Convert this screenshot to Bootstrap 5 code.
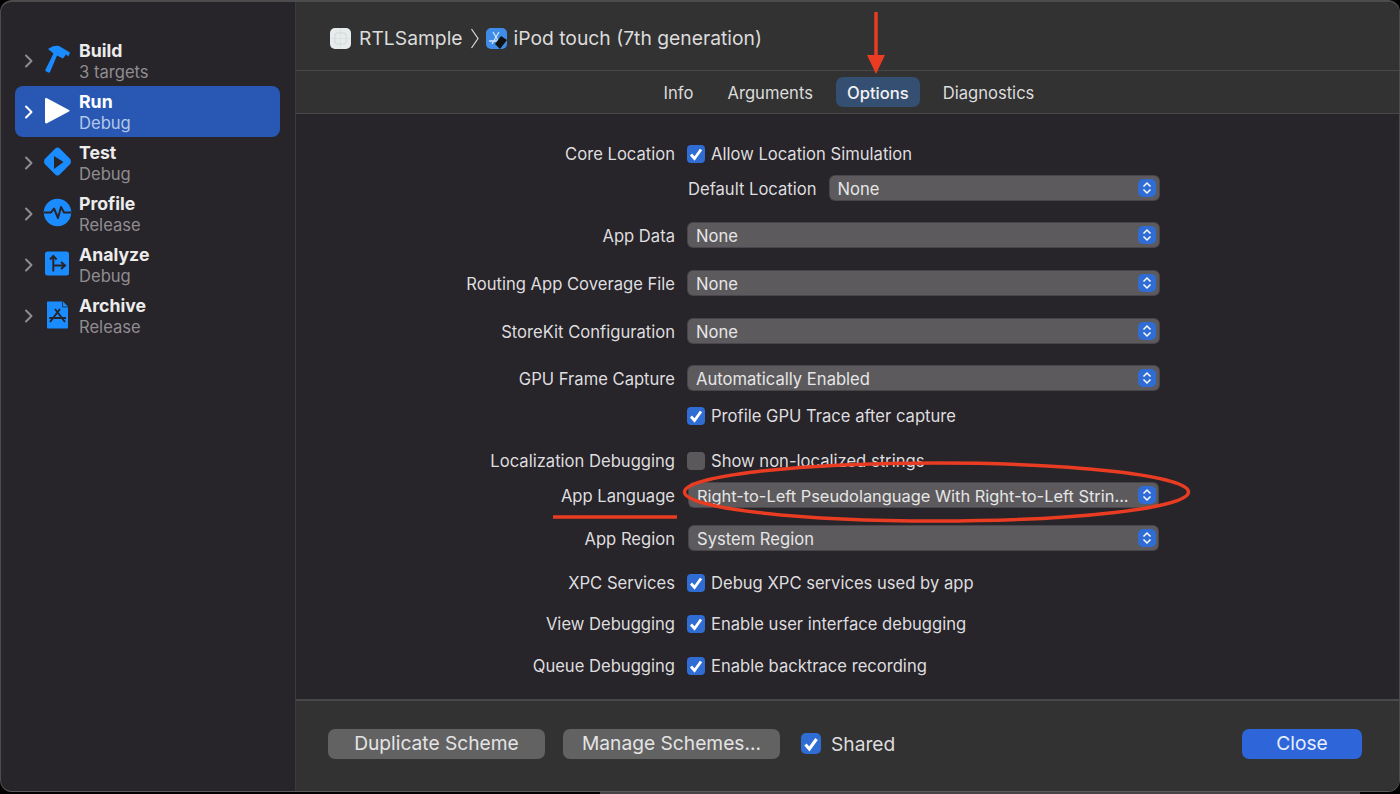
<!DOCTYPE html>
<html lang="en">
<head>
    <meta charset="UTF-8">
    <meta name="viewport" content="width=device-width, initial-scale=1.0">
    <title>Edit Scheme</title>
    <link href="https://cdn.jsdelivr.net/npm/bootstrap@5.3.0/dist/css/bootstrap.min.css" rel="stylesheet">
    <style>
        html, body {
            height: 100%;
            overflow: hidden;
            background: #000;
        }

        body {
            font-family: Inter, "Liberation Sans", sans-serif;
            color: #dedddf;
            font-size: 16.6px;
        }

        .sheet {
            height: 792px;
            background: #27242a;
            border: 1px solid #4c4c4c;
            border-top-width: 2px;
            border-bottom-color: #5a5a5a;
            border-radius: 12px;
            overflow: hidden;
            position: relative;
        }

        .under-strip {
            height: 2px;
            width: 760px;
            margin-left: 600px;
            background: #444;
        }

        /* sidebar */
        .side {
            width: 295px;
            padding: 33px 15px 0 14px;
            border-right: 1px solid #3c3a3d;
            flex-shrink: 0;
        }

        .side .list-group-item {
            background: transparent;
            border: 0;
            height: 51px;
            padding: 0 0 0 9px;
            border-radius: 8px;
            color: #e6e6e7;
        }

        .side .list-group-item.active {
            background: #2858b3;
            margin: 0;
        }

        .chev {
            width: 9px;
            height: 14px;
            margin-right: 11px;
            color: #8f8d90;
        }

        .active .chev {
            color: #fff;
        }

        .act-icon {
            width: 28px;
            height: 28px;
            margin-right: 7px;
            flex-shrink: 0;
            overflow: visible;
        }

        .act-text {
            padding-top: 2px;
        }

        .act-name {
            font-size: 17.7px;
            font-weight: 700;
            line-height: 21px;
            color: #ececec;
        }

        .act-sub {
            font-size: 16.6px;
            line-height: 22px;
            color: #8f8d90;
        }

        .active .act-name {
            color: #fff;
        }

        .active .act-sub {
            color: #b5c6e8;
        }

        /* top */
        .top-bar {
            height: 69px;
            background: #323232;
            padding: 5px 0 0 34px;
            font-size: 19.3px;
            border-bottom: 1px solid #484848;
            color: #dcdcdc;
        }

        .crumb-sep {
            margin: 0 7px 0 8px;
        }

        .crumb-text {
            margin-left: 7px;
        }

        .tab-bar {
            height: 43px;
            background: #323232;
            border-bottom: 1px solid #484848;
            padding-left: 3px;
        }

        .tab-list {
            gap: 12px;
        }

        .tab-bar .nav-link {
            color: #dcdcdc;
            padding: 0 11px;
            height: 30px;
            line-height: 32px;
            font-size: 16.6px;
            border-radius: 7px;
        }

        .tab-bar .nav-link.active {
            background: #344f72;
            color: #f2f2f2;
            font-weight: 500;
        }

        /* form */
        .opts {
            padding-top: 27px;
            padding-right: 240px;
        }

        .opt-row {
            height: 24px;
        }

        .opt-label {
            width: 379px;
            text-align: right;
            margin-right: 13px;
            padding-top: 2px;
            flex-shrink: 0;
        }

        .opt-check {
            display: flex;
            align-items: center;
            margin: 0 0 0 -1px;
            padding: 2px 0 0;
        }

        .opt-check .form-check-input {
            width: 18px;
            height: 18px;
            margin: 0 6px 0 0;
            float: none;
            border: 0;
            border-radius: 4px;
            background-color: #5a585b;
        }

        .opt-check .form-check-input:checked {
            background-color: #2f6cd3;
            --bs-form-check-bg-image: url("data:image/svg+xml,%3csvg xmlns='http://www.w3.org/2000/svg' viewBox='0 0 18 18'%3e%3cpath fill='none' stroke='%23fff' stroke-width='2.800' d='M4 9.500 7.500 13.500 14 4.500'/%3e%3c/svg%3e");
        }

        .popup {
            flex-grow: 1;
            height: 24px;
            background: #5c5a5d;
            color: #e6e6e6;
            border: 0;
            border-radius: 5px;
            padding: 0 3px 0 8px;
            font-size: 16.6px;
            box-shadow: 0 0 0 1px #48464a;
        }

        .popup span {
            padding-top: 2px;
        }

        .popup:hover, .popup:active {
            background: #5c5a5d !important;
            color: #e6e6e6 !important;
        }

        .popup-inset {
            margin: 0 1px;
            padding-left: 8px;
            padding-right: 2px;
        }

        .popup-long {
            font-size: 16.4px;
        }

        .stepper {
            width: 18px;
            height: 18px;
            background: #2f6cd3;
            border-radius: 5px;
            flex-shrink: 0;
        }

        .opt-inline-label {
            margin-right: 13px;
            padding-top: 2px;
        }

        .m11 { margin-top: 11px; }
        .m13 { margin-top: 13px; }
        .m17 { margin-top: 17px; }
        .m18 { margin-top: 18px; }
        .m19 { margin-top: 19px; }
        .m20 { margin-top: 20px; }
        .m21 { margin-top: 21px; }
        .m23 { margin-top: 23px; }
        .m24 { margin-top: 24px; }

        /* footer */
        .foot {
            height: 92px;
            background: #323232;
            border-top: 2px solid #484848;
            padding: 0 37px 4px 32px;
            font-size: 19.2px;
        }

        .mac-btn {
            height: 30px;
            width: 217px;
            background: #636263;
            color: #e4e4e4;
            border: 0;
            border-radius: 7px;
            font-size: 19.2px;
            line-height: 28px;
            padding: 0 0 2px;
        }

        .mac-btn:hover, .mac-btn:active {
            background: #636263 !important;
            color: #e4e4e4 !important;
        }

        .mac-next {
            margin-left: 18px;
        }

        .mac-blue, .mac-blue:hover, .mac-blue:active {
            width: 120px;
            background: #2e66d9 !important;
            color: #e6eeff !important;
        }

        .foot .opt-check {
            margin-left: 21px;
            padding: 0;
        }

        .foot .opt-check .form-check-input {
            width: 20px;
            height: 21px;
            margin-right: 10px;
            border-radius: 5px;
        }

        .notes {
            position: absolute;
            left: -1px;
            top: -2px;
            pointer-events: none;
        }
    </style>
</head>
<body>
<div class="sheet d-flex">
    <div class="side">
        <div class="list-group">
            <a class="list-group-item d-flex align-items-center">
                <svg class="chev" viewBox="0 0 9 14"><path d="M2 1.5 7.5 7 2 12.5" fill="none" stroke="currentColor" stroke-width="2" stroke-linecap="round" stroke-linejoin="round"/></svg>
                <svg class="act-icon" viewBox="0 0 28 28"><path d="M4 2C8-1 12-2 15-1L26 5.500 24.500 9.500 22 7.500 19 11.500 13 8.500 6 25Q5 26 4 25.500L1.500 24Q1 23.500 1.500 22.500L9.500 6.500Z" fill="#1a8cff"/></svg>
                <div class="act-text"><div class="act-name">Build</div><div class="act-sub">3 targets</div></div>
            </a>
            <a class="list-group-item active d-flex align-items-center">
                <svg class="chev" viewBox="0 0 9 14"><path d="M2 1.5 7.5 7 2 12.5" fill="none" stroke="currentColor" stroke-width="2" stroke-linecap="round" stroke-linejoin="round"/></svg>
                <svg class="act-icon" viewBox="0 0 28 28"><path d="M1 1C1 0 2-.3 3 .3L25 12c.7.4.7 1 0 1.400L3 25.300C2 25.800 1 25.300 1 24.300Z" fill="#fff"/></svg>
                <div class="act-text"><div class="act-name">Run</div><div class="act-sub">Debug</div></div>
            </a>
            <a class="list-group-item d-flex align-items-center">
                <svg class="chev" viewBox="0 0 9 14"><path d="M2 1.5 7.5 7 2 12.5" fill="none" stroke="currentColor" stroke-width="2" stroke-linecap="round" stroke-linejoin="round"/></svg>
                <svg class="act-icon" viewBox="0 0 28 28"><path d="M11.500-.8 1 9.800c-1.300 1.300-1.300 4 0 5.400L11.500 25.800c1.100 1.100 3 1.100 4 0L26 15.200c1.300-1.400 1.300-4.100 0-5.400L15.500-.8c-1-1.100-2.900-1.100-4 0Z" fill="#1a8cff"/><path d="M10 7 19.500 13 10 20Z" fill="#27242a"/></svg>
                <div class="act-text"><div class="act-name">Test</div><div class="act-sub">Debug</div></div>
            </a>
            <a class="list-group-item d-flex align-items-center">
                <svg class="chev" viewBox="0 0 9 14"><path d="M2 1.5 7.5 7 2 12.5" fill="none" stroke="currentColor" stroke-width="2" stroke-linecap="round" stroke-linejoin="round"/></svg>
                <svg class="act-icon" viewBox="0 0 28 28"><circle cx="13.500" cy="12.500" r="13.700" fill="#1a8cff"/><path d="M0 12.500H7L10 8.500 14 18 17 7 20 12.500H27" fill="none" stroke="#27242a" stroke-width="2" stroke-linejoin="round"/></svg>
                <div class="act-text"><div class="act-name">Profile</div><div class="act-sub">Release</div></div>
            </a>
            <a class="list-group-item d-flex align-items-center">
                <svg class="chev" viewBox="0 0 9 14"><path d="M2 1.5 7.5 7 2 12.5" fill="none" stroke="currentColor" stroke-width="2" stroke-linecap="round" stroke-linejoin="round"/></svg>
                <svg class="act-icon" viewBox="0 0 28 28"><rect x="1" y=".5" width="24" height="24" rx="2.500" fill="#1a8cff"/><path d="M9.300 20.500V5M6 8.500 9.300 5 12.600 8.500M10 14.500H20.500M17 11 21 14.500 17 18" fill="none" stroke="#27242a" stroke-width="2"/></svg>
                <div class="act-text"><div class="act-name">Analyze</div><div class="act-sub">Debug</div></div>
            </a>
            <a class="list-group-item d-flex align-items-center">
                <svg class="chev" viewBox="0 0 9 14"><path d="M2 1.5 7.5 7 2 12.5" fill="none" stroke="currentColor" stroke-width="2" stroke-linecap="round" stroke-linejoin="round"/></svg>
                <svg class="act-icon" viewBox="0 0 28 28"><path d="M4 -.5C3.400-.5 3-.1 3 .5V25.500C3 26.100 3.400 26.500 4 26.500H23C23.600 26.500 24 26.100 24 25.500V4.500L19-.5Z" fill="#1a8cff"/><path d="M18.500-.5V5H24" fill="none" stroke="#27242a" stroke-width=".8"/><path d="M6 20 16 7M11 7 21 20M5.300 16H22" fill="none" stroke="#27242a" stroke-width="2"/></svg>
                <div class="act-text"><div class="act-name">Archive</div><div class="act-sub">Release</div></div>
            </a>
        </div>
    </div>

    <div class="d-flex flex-column flex-grow-1">
        <div class="top-bar d-flex align-items-center">
            <svg width="21" height="21" viewBox="0 0 21 21"><rect width="21" height="21" rx="5" fill="#e6ebec"/><rect x="5" y="5" width="11" height="11" rx="2" fill="none" stroke="#cfd8d8"/><path d="M10.500 0V21M0 10.500H21" stroke="#d6dede" stroke-width=".7"/></svg>
            <span class="ms-2">RTLSample</span>
            <svg class="crumb-sep" width="8" height="21" viewBox="0 0 8 21"><path d="M.5 1 7 10.500 .5 20" fill="none" stroke="#dcdcdc" stroke-width="1.200"/></svg>
            <svg width="21" height="21" viewBox="0 0 21 21"><rect width="21" height="21" rx="5" fill="#3f8ce8"/><path d="M7 4 14 16M13 4 6 16M3 13H17" stroke="#cfe4fb" stroke-width="1.300"/><path d="M9 16 15 8 21 12 14 21Z" fill="#111"/></svg>
            <span class="crumb-text">iPod touch (7th generation)</span>
        </div>
        <div class="tab-bar d-flex justify-content-center align-items-center">
            <ul class="nav tab-list">
                <li class="nav-item"><a class="nav-link">Info</a></li>
                <li class="nav-item"><a class="nav-link">Arguments</a></li>
                <li class="nav-item"><a class="nav-link active">Options</a></li>
                <li class="nav-item"><a class="nav-link">Diagnostics</a></li>
            </ul>
        </div>

        <div class="opts flex-grow-1 d-flex flex-column">
            <div class="opt-row d-flex align-items-center">
                <div class="opt-label">Core Location</div>
                <label class="opt-check"><input class="form-check-input" type="checkbox" checked>Allow Location Simulation</label>
            </div>
            <div class="opt-row d-flex align-items-center m11">
                <div class="opt-label"></div>
                <span class="opt-inline-label">Default Location</span>
                <button class="btn popup d-flex align-items-center justify-content-between"><span>None</span><svg class="stepper" viewBox="0 0 18 18"><path d="M5.500 7.500 9 4 12.500 7.500M5.500 10.500 9 14 12.500 10.500" fill="none" stroke="#fff" stroke-width="1.500"/></svg></button>
            </div>
            <div class="opt-row d-flex align-items-center m23">
                <div class="opt-label">App Data</div>
                <button class="btn popup d-flex align-items-center justify-content-between"><span>None</span><svg class="stepper" viewBox="0 0 18 18"><path d="M5.500 7.500 9 4 12.500 7.500M5.500 10.500 9 14 12.500 10.500" fill="none" stroke="#fff" stroke-width="1.500"/></svg></button>
            </div>
            <div class="opt-row d-flex align-items-center m24">
                <div class="opt-label">Routing App Coverage File</div>
                <button class="btn popup d-flex align-items-center justify-content-between"><span>None</span><svg class="stepper" viewBox="0 0 18 18"><path d="M5.500 7.500 9 4 12.500 7.500M5.500 10.500 9 14 12.500 10.500" fill="none" stroke="#fff" stroke-width="1.500"/></svg></button>
            </div>
            <div class="opt-row d-flex align-items-center m24">
                <div class="opt-label">StoreKit Configuration</div>
                <button class="btn popup d-flex align-items-center justify-content-between"><span>None</span><svg class="stepper" viewBox="0 0 18 18"><path d="M5.500 7.500 9 4 12.500 7.500M5.500 10.500 9 14 12.500 10.500" fill="none" stroke="#fff" stroke-width="1.500"/></svg></button>
            </div>
            <div class="opt-row d-flex align-items-center m23">
                <div class="opt-label">GPU Frame Capture</div>
                <button class="btn popup d-flex align-items-center justify-content-between"><span>Automatically Enabled</span><svg class="stepper" viewBox="0 0 18 18"><path d="M5.500 7.500 9 4 12.500 7.500M5.500 10.500 9 14 12.500 10.500" fill="none" stroke="#fff" stroke-width="1.500"/></svg></button>
            </div>
            <div class="opt-row d-flex align-items-center m13">
                <div class="opt-label"></div>
                <label class="opt-check"><input class="form-check-input" type="checkbox" checked>Profile GPU Trace after capture</label>
            </div>
            <div class="opt-row d-flex align-items-center m21">
                <div class="opt-label">Localization Debugging</div>
                <label class="opt-check"><input class="form-check-input" type="checkbox">Show non-localized strings</label>
            </div>
            <div class="opt-row d-flex align-items-center m11">
                <div class="opt-label">App Language</div>
                <button class="btn popup popup-inset popup-long d-flex align-items-center justify-content-between"><span>Right-to-Left Pseudolanguage With Right-to-Left Strin...</span><svg class="stepper" viewBox="0 0 18 18"><path d="M5.500 7.500 9 4 12.500 7.500M5.500 10.500 9 14 12.500 10.500" fill="none" stroke="#fff" stroke-width="1.500"/></svg></button>
            </div>
            <div class="opt-row d-flex align-items-center m19">
                <div class="opt-label">App Region</div>
                <button class="btn popup popup-inset d-flex align-items-center justify-content-between"><span>System Region</span><svg class="stepper" viewBox="0 0 18 18"><path d="M5.500 7.500 9 4 12.500 7.500M5.500 10.500 9 14 12.500 10.500" fill="none" stroke="#fff" stroke-width="1.500"/></svg></button>
            </div>
            <div class="opt-row d-flex align-items-center m20">
                <div class="opt-label">XPC Services</div>
                <label class="opt-check"><input class="form-check-input" type="checkbox" checked>Debug XPC services used by app</label>
            </div>
            <div class="opt-row d-flex align-items-center m17">
                <div class="opt-label">View Debugging</div>
                <label class="opt-check"><input class="form-check-input" type="checkbox" checked>Enable user interface debugging</label>
            </div>
            <div class="opt-row d-flex align-items-center m18">
                <div class="opt-label">Queue Debugging</div>
                <label class="opt-check"><input class="form-check-input" type="checkbox" checked>Enable backtrace recording</label>
            </div>
        </div>

        <div class="foot d-flex align-items-center">
            <button class="btn mac-btn">Duplicate Scheme</button>
            <button class="btn mac-btn mac-next">Manage Schemes...</button>
            <label class="opt-check"><input class="form-check-input" type="checkbox" checked>Shared</label>
            <button class="btn mac-btn mac-blue ms-auto">Close</button>
        </div>
    </div>

    <!-- red annotations drawn over the screenshot -->
    <svg class="notes" width="1400" height="792" viewBox="0 0 1400 792">
        <path d="M876 12V58" stroke="#e93c22" stroke-width="3.500" fill="none"/>
        <path d="M867 55H885L876 74Z" fill="#e93c22"/>
        <path d="M553 517H677" stroke="#e93c22" stroke-width="3.500"/>
        <ellipse cx="936.500" cy="492" rx="252" ry="29" fill="none" stroke="#e93c22" stroke-width="3.500"/>
    </svg>
</div>
<div class="under-strip"></div>
</body>
</html>
